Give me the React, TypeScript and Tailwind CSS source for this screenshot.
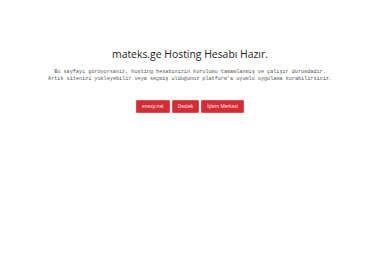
export default function App() {
  const buttons = ['enexy.net', 'Destek', 'İşlem Merkezi'];
  return (
    <div className="w-[380px] h-[260px] bg-white flex flex-col items-center pt-[47px]">
      <h1 className="text-[10.4px] leading-[15px] text-[#222] font-['Open_Sans',sans-serif]">
        mateks.ge Hosting Hesabı Hazır.
      </h1>
      <div className="mt-[7px] text-center text-[5.15px] leading-[7px] text-[#555] font-['Liberation_Mono',monospace]">
        <p>Bu sayfayı görüyorsanız, hosting hesabınızın kurulumu tamamlanmış ve çalışır durumdadır.</p>
        <p>Artık sitenizi yükleyebilir veya seçmiş olduğunuz platform'a uyumlu uygulama kurabilirsiniz.</p>
      </div>
      <div className="mt-[17px] flex gap-[2px]">
        {buttons.map((b) => (
          <a
            key={b}
            className="h-[13px] px-[5px] flex items-center bg-[#d52b32] border border-[#e04a50] text-white text-[4.8px] font-['Open_Sans',sans-serif] rounded-[1px]"
          >
            {b}
          </a>
        ))}
      </div>
    </div>
  );
}
